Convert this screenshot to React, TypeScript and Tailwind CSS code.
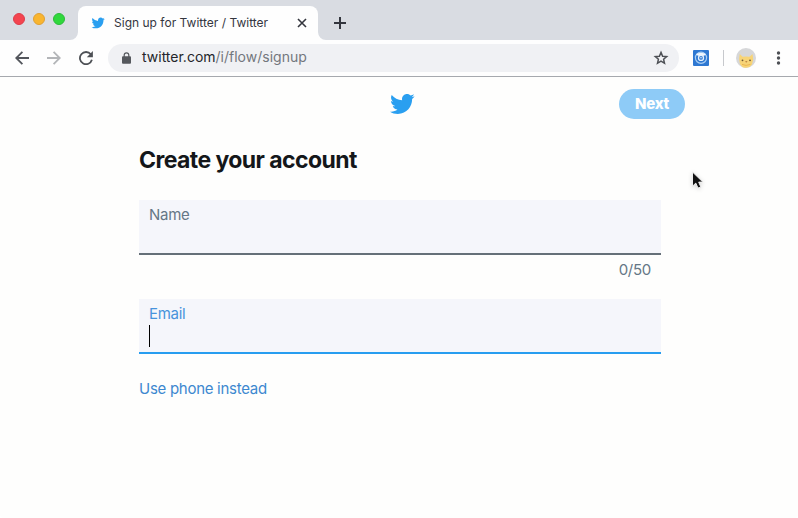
import React from "react";

function Bird({ className }: { className: string }) {
  return (
    <svg viewBox="0 0 24 24" className={className} fill="#2a9ff0">
      <path d="M23.643 4.937c-.835.37-1.732.62-2.675.733.962-.576 1.7-1.49 2.048-2.578-.9.534-1.897.922-2.958 1.13-.85-.904-2.06-1.47-3.4-1.47-2.572 0-4.658 2.086-4.658 4.66 0 .364.042.718.12 1.06-3.873-.195-7.304-2.05-9.602-4.868-.4.69-.63 1.49-.63 2.342 0 1.616.823 3.043 2.072 3.878-.764-.025-1.482-.234-2.11-.583v.06c0 2.257 1.605 4.14 3.737 4.568-.392.106-.803.162-1.227.162-.3 0-.593-.028-.877-.082.593 1.85 2.313 3.198 4.352 3.234-1.595 1.25-3.604 1.995-5.786 1.995-.376 0-.747-.022-1.112-.065 2.062 1.323 4.51 2.093 7.14 2.093 8.57 0 13.255-7.098 13.255-13.254 0-.2-.005-.402-.014-.602.91-.658 1.7-1.477 2.323-2.41z" />
    </svg>
  );
}

function TabStrip() {
  return (
    <div className="flex h-10 items-end bg-[#d9dce2]">
      <div className="flex h-10 w-[70px] items-center gap-2 pb-[2px] pl-[13px]">
        <span className="size-3 shrink-0 rounded-full border border-[#dc3d4b] bg-[#f4444f]" />
        <span className="size-3 shrink-0 rounded-full border border-[#dfa034] bg-[#f9b52f]" />
        <span className="size-3 shrink-0 rounded-full border border-[#2cba3a] bg-[#30d83c]" />
      </div>
      <svg className="size-2 shrink-0" viewBox="0 0 8 8" fill="#fefefe">
        <path d="M8 0v8H0a8 8 0 0 0 8-8z" />
      </svg>
      <div className="flex h-[34px] w-[240px] items-center rounded-t-lg bg-[#fefefe] pl-[13px] text-[#34363e]">
        <Bird className="size-[14px] shrink-0" />
        <span className="ml-[9px] w-[174px] whitespace-nowrap text-[12px] tracking-[0.01px]">Sign up for Twitter / Twitter</span>
        <svg className="ml-[9px] size-[10px]" viewBox="0 0 10 10" stroke="#34363e" strokeWidth="1.6">
          <path d="M1 1l8 8M9 1l-8 8" />
        </svg>
      </div>
      <svg className="size-2 shrink-0" viewBox="0 0 8 8" fill="#fefefe">
        <path d="M0 0v8h8a8 8 0 0 1-8-8z" />
      </svg>
      <svg className="mb-[11px] ml-2 size-3" viewBox="0 0 12 12" stroke="#34363e" strokeWidth="2">
        <path d="M6 0v12M0 6h12" />
      </svg>
    </div>
  );
}

function Toolbar() {
  return (
    <div className="flex h-[37px] items-center border-b border-[#a6a9ae] bg-[#fefefe] pl-[15px]">
      <svg className="size-[14px]" viewBox="0 0 14 14" fill="none" stroke="#53565c" strokeWidth="1.8">
        <path d="M14 7H1.5M7.4.8L1.2 7l6.2 6.2" />
      </svg>
      <svg className="ml-[18px] size-[14px]" viewBox="0 0 14 14" fill="none" stroke="#b3b5b8" strokeWidth="1.8">
        <path d="M0 7h12.5M6.6.8L12.8 7l-6.2 6.2" />
      </svg>
      <svg className="ml-[18px] size-[14px]" viewBox="0 0 14 14" fill="none">
        <path d="M11.8 3.3A6.1 6.1 0 1 0 12.9 8.8" stroke="#4d5055" strokeWidth="1.8" />
        <path d="M13.9 0v6.2H7.8z" fill="#4d5055" />
      </svg>
      <div className="ml-[15px] flex h-7 w-[571px] items-center rounded-full bg-[#f0f1f4] pl-[14px]">
        <svg className="mb-px h-3 w-[9px]" viewBox="0 0 9 12">
          <path d="M2.2 5V3.1a2.3 2.3 0 0 1 4.6 0V5" fill="none" stroke="#55585d" strokeWidth="1.2" />
          <rect y="4.2" width="9" height="7.5" rx="1" fill="#55585d" />
        </svg>
        <span className="ml-[11px] pb-0.5 text-[14px] leading-5 text-[#73777d]">
          <span className="text-[#24262a]">twitter.com</span>/i/flow/signup
        </span>
        <svg className="ml-auto mr-[10px] size-4" viewBox="0 0 16 16" fill="none" stroke="#4d5055" strokeWidth="1.5">
          <path d="M8 2.4l1.6 3.8 4.1.4-3.1 2.7.9 4L8 11.2l-3.5 2.1.9-4-3.1-2.7 4.1-.4z" />
        </svg>
      </div>
      <svg className="ml-[14px] size-4" viewBox="0 0 16 16">
        <rect width="16" height="16" rx="1" fill="#2e78d2" />
        <circle cx="8" cy="7.8" r="5.6" fill="none" stroke="#a9cef3" strokeWidth="1.2" />
        <path d="M3.2 5q0-1.8 1.9-1.8 2.9-1 5.8 0 1.9 0 1.9 1.8L10 6H6z" fill="#eef6fe" />
        <circle cx="8" cy="7.9" r="2.5" fill="#2e78d2" stroke="#e4f1fd" strokeWidth="1.3" />
        <circle cx="8" cy="7.7" r=".8" fill="#e4f1fd" />
      </svg>
      <div className="ml-[14px] h-4 w-px bg-[#c7c9cd]" />
      <svg className="ml-3 size-5" viewBox="0 0 20 20">
        <circle cx="10" cy="10" r="10" fill="#d6d7d9" />
        <path d="M3.7 6l3 2.8q3.4-.8 6.8 0l3-2.8.7 5.2-1.2 5.3-2.4 2.6a10 10 0 0 1-7 .1L4 16.2l-.9-5z" fill="#f7d477" />
        <circle cx="6.5" cy="12.3" r=".9" fill="#6d5732" />
        <circle cx="14" cy="12.3" r=".9" fill="#6d5732" />
        <path d="M9 13.7l1.3-.7 1.3.7-1.3.9z" fill="#b77c3c" />
        <path d="M6 16.4q4 2 8.4 0" fill="none" stroke="#edb64e" />
      </svg>
      <svg className="ml-5 h-[14px] w-[5px]" viewBox="0 0 5 14" fill="#4d5055">
        <circle cx="2.5" cy="2" r="1.7" />
        <circle cx="2.5" cy="7" r="1.7" />
        <circle cx="2.5" cy="12" r="1.7" />
      </svg>
    </div>
  );
}

export default function App() {
  return (
    <div className="relative flex h-[518px] w-[798px] flex-col overflow-hidden rounded-b-[4px] bg-[#fefefd] font-['Inter','Liberation_Sans',sans-serif]">
      <TabStrip />
      <Toolbar />
      <header className="flex h-[53px] items-center pl-[389px]">
        <Bird className="size-[26px]" />
        <button className="ml-[204px] h-[30px] w-[66px] rounded-full bg-[#8ecbf7] pt-px text-[15px] font-extrabold tracking-[-0.25px] text-white">Next</button>
      </header>
      <main className="ml-[139px] w-[522px]">
        <h1 className="mt-[14px] whitespace-nowrap text-[23px] font-bold leading-8 tracking-[-0.57px] text-[#14171a]">Create your account</h1>
        <div className="mt-6 h-[55px] border-b-2 border-[#657078] bg-[#f5f6fb] px-[10px] pt-[5px] text-[15px] leading-5 tracking-[-0.28px] text-[#657786]">Name</div>
        <div className="pr-[10px] pt-[5px] text-right text-[15px] leading-5 tracking-[-0.28px] text-[#657786]">0/50</div>
        <div className="mt-[19px] h-[55px] border-b-2 border-[#279df0] bg-[#f5f6fb] px-[10px] pt-[5px] text-[15px] leading-5 tracking-[-0.28px] text-[#4793dc]">
          Email
          <div className="mt-px h-[22px] w-px bg-black" />
        </div>
        <a className="mt-[25px] block text-[15px] leading-5 tracking-[-0.28px] text-[#3d88d0]">Use phone instead</a>
      </main>
      <svg className="absolute left-[691px] top-[171px] h-[19px] w-[14px] drop-shadow-sm" viewBox="0 0 14 19">
        <path d="M1.5 1v14.2l3.3-3.1 2.2 5 2.8-1.2-2.1-4.8h4.2z" fill="#111" stroke="#eee" strokeWidth="1" />
      </svg>
    </div>
  );
}
